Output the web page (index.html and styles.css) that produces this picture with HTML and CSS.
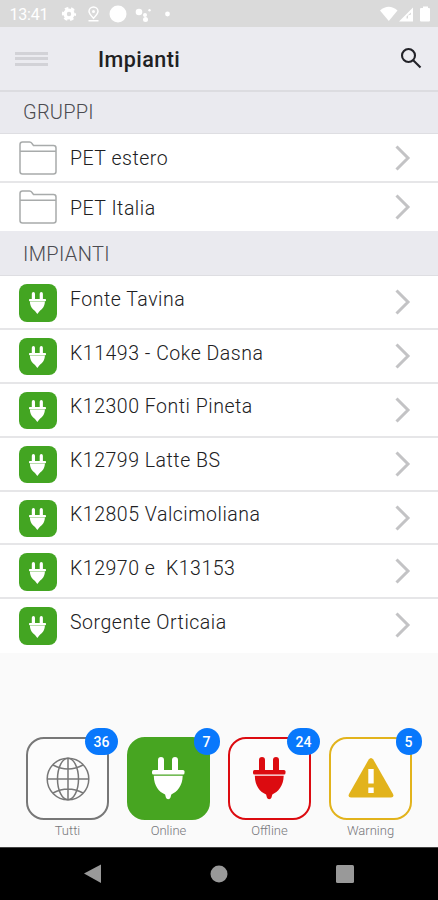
FILE: index.html
```html
<!DOCTYPE html>
<html lang="it">
<head>
<meta charset="utf-8">
<title>Impianti</title>
<link rel="stylesheet" href="styles.css">
</head>
<body>
<svg class="defs" aria-hidden="true">
  <symbol id="plug" viewBox="0 0 34 43">
    <path d="M6 15V3a3 3 0 0 1 6 0v12zM20 15V3a3 3 0 0 1 6 0v12z"/>
    <rect x="0" y="13" width="32.500" height="4.500" rx="1.500"/>
    <path d="M1.800 18.800H30.700C30.500 29 25 35 19.300 37.500L18.500 40.500a2.400 2.400 0 0 1-4.600 0L13.100 37.500C7 35 2 29 1.800 18.800z"/>
  </symbol>
  <symbol id="mini-plug" viewBox="0 0 17 22">
    <path d="M2.800 8V1.700a1.600 1.600 0 0 1 3.200 0V8zM10.700 8V1.700a1.600 1.600 0 0 1 3.200 0V8z"/>
    <rect x="0" y="7" width="17" height="2.200" rx=".8"/>
    <path d="M.9 9.500H15.900C15.800 14.500 13.200 17 10.500 19.200L8.300 21.900 6.200 19.200C3.500 17 1 14.500 .9 9.500z"/>
  </symbol>
  <symbol id="chevron" viewBox="0 0 16 26">
    <path d="M1.500 1.500 13 13 1.500 24.500" fill="none" stroke="#c3c3c5" stroke-width="3"/>
  </symbol>
  <symbol id="folder" viewBox="0 0 38 34">
    <path d="M1 30.500V3.500Q1 1 3.500 1H10.500Q12 1 12.800 2.200L14.500 4.500H34.500Q37 4.500 37 7V30.500Q37 33 34.500 33H3.500Q1 33 1 30.500zM1 10.200H37" fill="none" stroke="#a8abab" stroke-width="1.500"/>
  </symbol>
</svg>
<header class="status">
  <span class="time">13:41</span>
  <svg class="status-left" width="116" height="20" viewBox="0 0 116 20">
    <g fill="none" stroke="#fff"><circle cx="9" cy="10" r="3.900" stroke-width="3.400"/><circle cx="9" cy="10" r="5.900" stroke-width="2.400" stroke-dasharray="3.400 2.778" stroke-dashoffset="1.700"/>
    <path d="M33.500 14.300C30 10.500 29 9 29 7.500a4.500 4.500 0 0 1 9 0C38 9 37 10.500 33.500 14.300zM28.500 16.800h10" stroke-width="1.500"/></g>
    <g fill="#fff"><circle cx="33.500" cy="7.500" r="1.500"/><circle cx="58" cy="10" r="8.500"/><circle cx="79" cy="8" r="3.300"/><circle cx="85" cy="11" r="2"/><circle cx="85.500" cy="15.500" r="2.500"/><circle cx="89.500" cy="6.300" r="1.200"/><circle cx="107.500" cy="10" r="2.400"/></g>
  </svg>
  <svg class="status-right" width="50" height="16" viewBox="0 0 50 16" fill="#fff">
    <path d="M0 4.500Q8.700-3 17.500 4.500L8.800 15z"/>
    <path fill-rule="evenodd" d="M19 15.500 33 1.500v14zM26.500 12.500h1.500v-3l3-1V6.500l-4.500 4z"/>
    <path d="M41.500 2H43V.500h5V2h1q1 0 1 1v11.500q0 1-1 1h-8q-1 0-1-1V3q0-1 1-1z"/>
  </svg>
</header>
<nav class="appbar">
  <div class="menu"><i></i><i></i><i></i></div>
  <h1>Impianti</h1>
  <svg class="search" width="22" height="22" viewBox="0 0 22 22" fill="none" stroke="#222228" stroke-width="2.100"><circle cx="8.500" cy="8.500" r="6.500"/><path d="M13.200 13.200 20.500 20.500"/></svg>
</nav>
<main>
  <h2 class="section first">GRUPPI</h2>
  <ul class="groups">
    <li><svg class="folder"><use href="#folder"/></svg><span>PET estero</span><svg class="chevron"><use href="#chevron"/></svg></li>
    <li><svg class="folder"><use href="#folder"/></svg><span>PET Italia</span><svg class="chevron"><use href="#chevron"/></svg></li>
  </ul>
  <h2 class="section">IMPIANTI</h2>
  <ul class="plants">
    <li><b class="socket"><svg><use href="#mini-plug"/></svg></b><span>Fonte Tavina</span><svg class="chevron"><use href="#chevron"/></svg></li>
    <li><b class="socket"><svg><use href="#mini-plug"/></svg></b><span>K11493 - Coke Dasna</span><svg class="chevron"><use href="#chevron"/></svg></li>
    <li><b class="socket"><svg><use href="#mini-plug"/></svg></b><span>K12300 Fonti Pineta</span><svg class="chevron"><use href="#chevron"/></svg></li>
    <li><b class="socket"><svg><use href="#mini-plug"/></svg></b><span>K12799 Latte BS</span><svg class="chevron"><use href="#chevron"/></svg></li>
    <li><b class="socket"><svg><use href="#mini-plug"/></svg></b><span>K12805 Valcimoliana</span><svg class="chevron"><use href="#chevron"/></svg></li>
    <li><b class="socket"><svg><use href="#mini-plug"/></svg></b><span>K12970 e  K13153</span><svg class="chevron"><use href="#chevron"/></svg></li>
    <li><b class="socket"><svg><use href="#mini-plug"/></svg></b><span>Sorgente Orticaia</span><svg class="chevron"><use href="#chevron"/></svg></li>
  </ul>
</main>
<footer class="filters">
  <div class="filter all">
    <div class="tile"><svg width="44" height="44" viewBox="0 0 44 44" fill="none" stroke="currentColor" stroke-width="1.500"><circle cx="22" cy="22" r="20.800"/><ellipse cx="22" cy="22" rx="10.500" ry="20.800"/><path d="M22 1V43M1 22H43M7 8Q22 16 37 8M7 36Q22 28 37 36"/></svg><em>36</em></div>
    <p>Tutti</p>
  </div>
  <div class="filter online">
    <div class="tile"><svg class="plug"><use href="#plug"/></svg><em>7</em></div>
    <p>Online</p>
  </div>
  <div class="filter offline">
    <div class="tile"><svg class="plug"><use href="#plug"/></svg><em>24</em></div>
    <p>Offline</p>
  </div>
  <div class="filter warning">
    <div class="tile"><svg class="alert" width="46" height="40" viewBox="0 0 46 40"><path fill="currentColor" d="M20.700 1.500Q23-1.500 25.300 1.500L45 36Q46.500 39.500 43 39.500H3Q-.5 39.500 1 36z"/><path fill="#fff" d="M20.300 11h5.400v14.500h-5.400zM20.300 29.500h5.400v5.400h-5.400z"/></svg><em>5</em></div>
    <p>Warning</p>
  </div>
</footer>
<div class="system">
  <svg width="18" height="20" viewBox="0 0 18 20"><path d="M0 9.500 17 .500V19z"/></svg>
  <svg width="18" height="18" viewBox="0 0 18 18"><circle cx="9" cy="9" r="8.500"/></svg>
  <svg width="18" height="18" viewBox="0 0 18 18"><rect width="18" height="18" rx="1.500"/></svg>
</div>
</body>
</html>
```
FILE: styles.css
```css
* { box-sizing: border-box; margin: 0; padding: 0; }
body {
  width: 438px; height: 900px; overflow: hidden;
  display: flex; flex-direction: column;
  background: #fafafa; color: #202022;
  font-family: Roboto, sans-serif;
}
svg { display: block; flex: none; }
.defs { position: absolute; width: 0; height: 0; }
ul { list-style: none; }

.status { height: 27px; flex: none; background: #dadada; display: flex; align-items: center; padding: 2px 8px 0 9.500px; }
.time { width: 50px; color: #fff; font-size: 16px; letter-spacing: -.2px; }
.status-left { margin-top: -1px; }
.status-right { margin-left: auto; margin-top: -1px; }

.appbar { height: 65px; flex: none; background: #ebebf0; border-bottom: 2px solid #dcdce0; display: flex; align-items: center; padding: 0 16px 0 15px; }
.menu { width: 83px; display: flex; flex-direction: column; gap: 2.500px; }
.menu i { width: 33px; height: 3px; background: #d2d2d7; }
h1 { font-size: 21.500px; line-height: 26px; font-weight: 500; letter-spacing: .45px; margin-top: 2px; }
.search { margin-left: auto; margin-top: -1px; }

.section { height: 45px; background: #eaeaef; color: #4b4b50; border-bottom: 1px solid #dedee2; padding-left: 23px; font-size: 20px; line-height: 47px; font-weight: 300; letter-spacing: .35px; }
.section.first { height: 42px; line-height: 40px; letter-spacing: .2px; }

li { display: flex; background: #fff; border-bottom: 2px solid #e6e6e8; padding: 0 27px 0 19px; font-size: 19.500px; font-weight: 300; letter-spacing: .52px; }
li span { white-space: pre; line-height: 24px; }
.chevron { width: 16px; height: 26px; margin-left: auto; }
.groups li { height: 49px; align-items: center; }
.groups li:last-child { height: 48px; border-bottom: 0; }
.groups span { padding-top: 3px; }
.folder { width: 38px; height: 34px; margin-right: 13px; }
.plants li { height: 53.900px; padding-top: 8px; }
.plants li:last-child { height: 53.600px; border-bottom: 0; }
.socket { width: 37.500px; height: 37.500px; flex: none; border-radius: 8px; background: #43a522; fill: #fff; margin-right: 13.500px; display: flex; align-items: center; justify-content: center; padding-top: 1px; }
.socket svg { width: 17px; height: 22px; }
.plants span { margin-top: 3.700px; }
.plants .chevron { margin-top: 5px; }

.filters { margin-top: auto; height: 110px; flex: none; display: flex; gap: 18px; padding-left: 26px; }
.filter { width: 83px; color: #777; }
.tile { position: relative; width: 83px; height: 83px; border: 2px solid currentColor; border-radius: 18px; background: #fcfcfc; display: flex; align-items: center; justify-content: center; }
.filter p { text-align: center; color: #77777a; font-size: 13px; line-height: 22px; font-weight: 300; }
.tile em { position: absolute; top: -11px; left: 57px; height: 27px; min-width: 33px; border-radius: 14px; background: #0878fc; color: #fff; font-style: normal; font-size: 14px; font-weight: 500; line-height: 28.500px; text-align: center; }
.online em, .warning em { min-width: 26px; left: 64.500px; }
.plug { width: 34px; height: 43px; fill: currentColor; }
.online .tile { background: #47a521; border-color: #47a521; color: #fff; }
.offline { color: #dc0b10; }
.warning { color: #e2b31c; }
.alert { transform: translateY(-1px); }

.system { height: 53px; flex: none; background: #000; border-top: 1px solid #444; fill: #999; display: flex; align-items: center; gap: 108px; padding-left: 84px; }
```
